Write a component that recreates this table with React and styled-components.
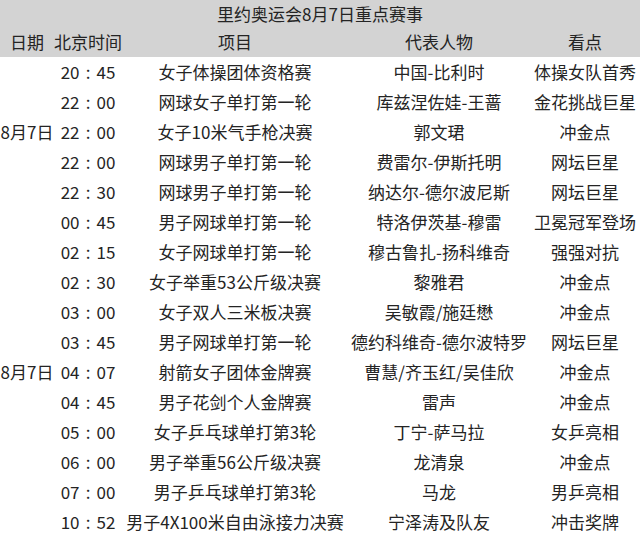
import React from "react";
import styled, { createGlobalStyle } from "styled-components";

const Global = createGlobalStyle`
  html, body { margin: 0; padding: 0; background: #ffffff; }
  body { font-family: "Noto Sans CJK SC", "Microsoft YaHei", sans-serif; }
`;

const Table = styled.div`
  width: 640px;
  display: grid;
  grid-template-columns: 54px 68px 226px 182px 110px;
  color: #242424;
  font-size: 17px;
  white-space: nowrap;
`;

const Head = styled.div`
  display: contents;
`;

const Title = styled.div`
  grid-column: 1 / -1;
  height: 28px;
  line-height: 28px;
  text-align: center;
  background: #d3d3d3;
`;

const HeadCell = styled.div`
  height: 29px;
  line-height: 27px;
  text-align: center;
  background: #d3d3d3;
`;

const Cell = styled.div`
  height: 30px;
  line-height: 30px;
  text-align: center;
  overflow: visible;
`;

const Colon = styled.span`
  display: inline-block;
  width: 17px;
  text-align: center;
`;

const rows = [
  ["", "20:45", "女子体操团体资格赛", "中国-比利时", "体操女队首秀"],
  ["", "22:00", "网球女子单打第一轮", "库兹涅佐娃-王蔷", "金花挑战巨星"],
  ["8月7日", "22:00", "女子10米气手枪决赛", "郭文珺", "冲金点"],
  ["", "22:00", "网球男子单打第一轮", "费雷尔-伊斯托明", "网坛巨星"],
  ["", "22:30", "网球男子单打第一轮", "纳达尔-德尔波尼斯", "网坛巨星"],
  ["", "00:45", "男子网球单打第一轮", "特洛伊茨基-穆雷", "卫冕冠军登场"],
  ["", "02:15", "女子网球单打第一轮", "穆古鲁扎-扬科维奇", "强强对抗"],
  ["", "02:30", "女子举重53公斤级决赛", "黎雅君", "冲金点"],
  ["", "03:00", "女子双人三米板决赛", "吴敏霞/施廷懋", "冲金点"],
  ["", "03:45", "男子网球单打第一轮", "德约科维奇-德尔波特罗", "网坛巨星"],
  ["8月7日", "04:07", "射箭女子团体金牌赛", "曹慧/齐玉红/吴佳欣", "冲金点"],
  ["", "04:45", "男子花剑个人金牌赛", "雷声", "冲金点"],
  ["", "05:00", "女子乒乓球单打第3轮", "丁宁-萨马拉", "女乒亮相"],
  ["", "06:00", "男子举重56公斤级决赛", "龙清泉", "冲金点"],
  ["", "07:00", "男子乒乓球单打第3轮", "马龙", "男乒亮相"],
  ["", "10:52", "男子4X100米自由泳接力决赛", "宁泽涛及队友", "冲击奖牌"],
];

const headers = ["日期", "北京时间", "项目", "代表人物", "看点"];

function Time({ value }) {
  const [h, m] = value.split(":");
  return (
    <>
      {h}
      <Colon>:</Colon>
      {m}
    </>
  );
}

export default function App() {
  return (
    <>
      <Global />
      <Table>
        <Head>
          <Title>里约奥运会8月7日重点赛事</Title>
          {headers.map((h) => (
            <HeadCell key={h}>{h}</HeadCell>
          ))}
        </Head>
        {rows.map((r, i) =>
          r.map((c, j) => (
            <Cell key={i + "-" + j}>{j === 1 ? <Time value={c} /> : c}</Cell>
          ))
        )}
      </Table>
    </>
  );
}
